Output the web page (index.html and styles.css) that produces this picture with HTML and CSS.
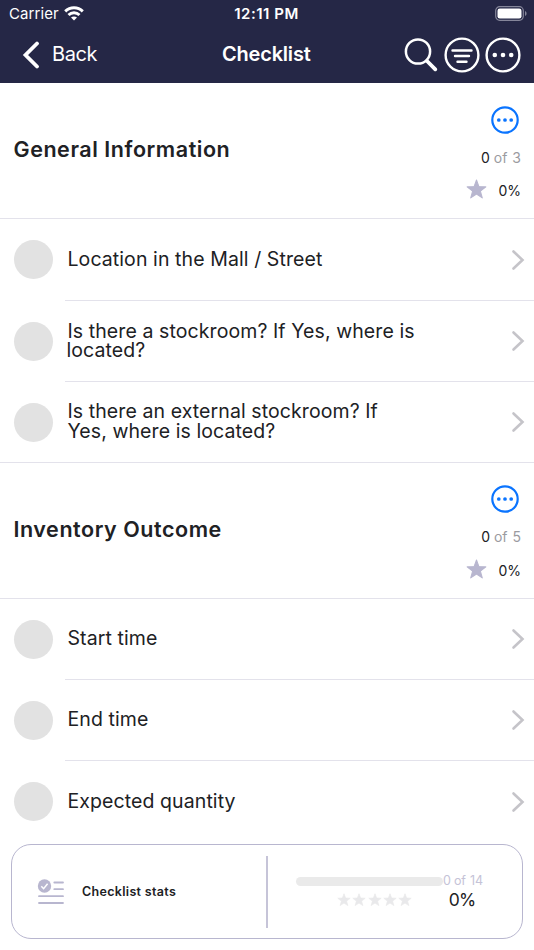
FILE: index.html
```html
<!DOCTYPE html>
<html lang="en">
<head>
<meta charset="utf-8">
<title>Checklist</title>
<link rel="stylesheet" href="styles.css">
</head>
<body>
<svg width="0" height="0" class="defs" aria-hidden="true">
  <symbol id="star" viewBox="0 0 20 20"><path d="M10 1l2.3 6.2 6.6.3-5.2 4.1 1.8 6.4-5.5-3.7L4.500 18l1.800-6.400L1.100 7.500l6.600-.3z" stroke="currentColor" stroke-width="1" stroke-linejoin="round" fill="currentColor"/></symbol>
  <symbol id="more" viewBox="0 0 28 28"><circle cx="14" cy="14" r="12.700" fill="none" stroke="currentColor" stroke-width="2.200"/><g fill="currentColor"><circle cx="7.800" cy="14" r="1.850"/><circle cx="14" cy="14" r="1.850"/><circle cx="20.200" cy="14" r="1.850"/></g></symbol>
  <symbol id="chev" viewBox="0 0 14 22"><path d="M2.500 2.500L11.500 11l-9 8.500" fill="none" stroke="currentColor" stroke-width="2.600" stroke-linecap="round" stroke-linejoin="miter"/></symbol>
</svg>
<div class="screen">
  <header class="top">
    <div class="status">
      <div class="carrier"><span>Carrier</span>
        <svg class="wifi" viewBox="0 0 20 15"><g fill="none" stroke="#fff" stroke-width="2.900"><path d="M1.200 5.400C6.200.6 13.800.6 18.800 5.400"/><path d="M4.500 9c3.100-3 7.900-3 11 0"/></g><path d="M10 14.600l-3-3c1.700-1.500 4.300-1.500 6 0z" fill="#fff"/></svg>
      </div>
      <div class="clock">12:11 PM</div>
      <svg class="battery" viewBox="0 0 32 15"><rect x=".7" y=".7" width="27.600" height="13.600" rx="4" fill="none" stroke="#85869a" stroke-width="1.200"/><rect x="2.500" y="2.500" width="24" height="10" rx="2.300" fill="#fff"/><path d="M30 5v5c2.100-.8 2.100-4.200 0-5z" fill="#85869a"/></svg>
    </div>
    <nav class="nav">
      <div class="back"><svg viewBox="0 0 18 28"><path d="M15 2.500L3.500 14 15 25.500" fill="none" stroke="#fff" stroke-width="3.800" stroke-linecap="round"/></svg><span>Back</span></div>
      <h1>Checklist</h1>
      <div class="actions">
        <svg class="search" viewBox="0 0 34 36"><circle cx="14" cy="14.500" r="12.100" fill="none" stroke="#fff" stroke-width="2.500"/><path d="M23 24l8.300 8.300" stroke="#fff" stroke-width="3.800" stroke-linecap="round"/></svg>
        <svg class="round" viewBox="0 0 36 36"><g fill="none" stroke="#fff" stroke-width="2.400" stroke-linecap="round"><circle cx="18" cy="18" r="16.400"/><path d="M8.500 13.500h19M11 19h14M13.500 24.700h9"/></g></svg>
        <svg class="round" viewBox="0 0 36 36"><circle cx="18" cy="18" r="16.400" fill="none" stroke="#fff" stroke-width="2.400"/><g fill="#fff"><circle cx="9.800" cy="18" r="2.300"/><circle cx="18" cy="18" r="2.300"/><circle cx="26.200" cy="18" r="2.300"/></g></svg>
      </div>
    </nav>
  </header>
  <main>
    <section>
      <div class="head">
        <h2>General Information</h2>
        <div class="meta">
          <svg class="more"><use href="#more"/></svg>
          <div class="count"><b>0</b> of <i>3</i></div>
          <div class="score"><svg><use href="#star"/></svg><span>0%</span></div>
        </div>
      </div>
      <div class="row"><span class="dot"></span><div class="cell"><p>Location in the Mall / Street</p><svg><use href="#chev"/></svg></div></div>
      <div class="row"><span class="dot"></span><div class="cell"><p>Is there a stockroom? If Yes, where is<br><span class="hang">located?</span></p><svg><use href="#chev"/></svg></div></div>
      <div class="row"><span class="dot"></span><div class="cell"><p>Is there an external stockroom? If<br>Yes, where is located?</p><svg><use href="#chev"/></svg></div></div>
    </section>
    <section>
      <div class="head">
        <h2>Inventory Outcome</h2>
        <div class="meta">
          <svg class="more"><use href="#more"/></svg>
          <div class="count"><b>0</b> of <i>5</i></div>
          <div class="score"><svg><use href="#star"/></svg><span>0%</span></div>
        </div>
      </div>
      <div class="row"><span class="dot"></span><div class="cell"><p>Start time</p><svg><use href="#chev"/></svg></div></div>
      <div class="row"><span class="dot"></span><div class="cell"><p>End time</p><svg><use href="#chev"/></svg></div></div>
      <div class="row"><span class="dot"></span><div class="cell"><p>Expected quantity</p><svg><use href="#chev"/></svg></div></div>
    </section>
  </main>
  <footer class="stats">
    <div class="label">
      <svg viewBox="0 0 28 28"><circle cx="7.500" cy="8" r="6.700" fill="#b8b6cf"/><path d="M4.300 8.300l2.300 2.400 4-5" fill="none" stroke="#fff" stroke-width="1.500"/><path d="M17.300 4.500H26M17.300 11.200H26M2 18.200h24M2 25h24" stroke="#b8b6cf" stroke-width="1.800" stroke-linecap="round"/></svg>
      <strong>Checklist stats</strong>
    </div>
    <div class="progress">
      <div class="line"><span class="bar"></span><span class="total">0 of <i>14</i></span></div>
      <div class="line2"><div class="stars"><svg><use href="#star"/></svg><svg><use href="#star"/></svg><svg><use href="#star"/></svg><svg><use href="#star"/></svg><svg><use href="#star"/></svg></div><span class="pct">0%</span></div>
    </div>
  </footer>
</div>
</body>
</html>
```
FILE: styles.css
```css
* { box-sizing: border-box; }
body { margin: 0; background: #fff; color: #202124; font-family: Inter, "Liberation Sans", sans-serif; }
h1, h2, p { margin: 0; }
svg { display: block; flex: none; }
i, b { font-style: normal; font-weight: 400; }
.defs { position: absolute; }
.screen { position: relative; height: 950px; overflow: hidden; }

.top { height: 83px; background: #252746; color: #fff; }
.status { display: grid; grid-template-columns: 1fr auto 1fr; align-items: center; height: 27px; padding: 0 7px 0 9px; }
.carrier { display: flex; align-items: center; gap: 5px; font-size: 15px; letter-spacing: .1px; }
.wifi { width: 20px; height: 15px; margin-top: -1px; }
.clock { font-size: 15px; font-weight: 600; letter-spacing: .5px; margin-left: -3px; }
.battery { width: 32px; height: 15px; justify-self: end; }
.nav { display: grid; grid-template-columns: 1fr auto 1fr; align-items: center; height: 56px; padding: 0 13.500px 0 22px; }
.back { display: flex; align-items: center; gap: 12px; font-size: 20px; letter-spacing: -.4px; }
.back span { margin-top: -2px; }
.back svg { width: 18px; height: 28px; }
h1 { font-size: 20px; font-weight: 600; letter-spacing: -.2px; margin: -2px 0 0 -10px; }
.actions { display: flex; align-items: center; justify-content: flex-end; gap: 5px; }
.search { width: 34px; height: 36px; margin-right: 1px; }
.round { width: 36px; height: 36px; }

.head { display: flex; justify-content: space-between; height: 136px; padding: 0 13px; border-bottom: 1px solid #e3e2eb; }
h2 { font-size: 21.500px; line-height: 133px; font-weight: 600; letter-spacing: .55px; padding-left: .5px; }
.meta { display: flex; flex-direction: column; align-items: flex-end; padding-top: 22.500px; }
.more { width: 28px; height: 28px; margin-right: 2.500px; color: #0a74ff; }
.count { margin-top: 15px; font-size: 14px; line-height: 18px; color: #9b9b9f; }
.count b { color: #202124; }
.count i { margin-left: 1px; }
.score { display: flex; align-items: center; gap: 11px; margin-top: 13.500px; font-size: 14px; line-height: 22px; }
.score svg { width: 21px; height: 21px; color: #b8b6cf; margin-top: -3px; }

.row { display: flex; align-items: stretch; height: 81.200px; padding-left: 14px; }
section:first-child .row:nth-child(2) { height: 82px; }
section:first-child .row:nth-child(4) { height: 80.400px; }
.dot { width: 39px; height: 39px; margin: 21px 12px 0 .3px; border-radius: 50%; background: #e2e2e2; flex: none; }
.cell { flex: 1; display: flex; align-items: center; justify-content: space-between; padding: 0 9px 0 2px; border-bottom: 1px solid #e3e2eb; }
.cell svg { width: 14px; height: 22px; color: #c5c4c9; }
p { font-size: 19.500px; line-height: 19.500px; letter-spacing: .09px; padding-left: .2px; }
.hang { margin-left: -1px; }
section:first-child .row:last-child { padding-left: 0; border-bottom: 1px solid #e3e2eb; }
section:first-child .row:last-child .dot { margin-left: 14.300px; }
.row:last-child .cell { border-bottom: 0; }

.stats { position: absolute; left: 11px; top: 844px; width: 512px; height: 95px; display: flex; align-items: center; border: 1.500px solid #b8b6cf; border-radius: 20px; background: #fff; }
.label { display: flex; align-items: center; width: 256px; height: 72px; padding-left: 25px; gap: 17px; border-right: 2px solid #c6c4d8; font-size: 12.500px; letter-spacing: .32px; }
.label strong { font-weight: 600; }
.label svg { width: 28px; height: 28px; }
.progress { padding-left: 28px; }
.line { display: flex; align-items: center; height: 16px; }
.bar { width: 147px; height: 9px; border-radius: 5px; background: #eaeaea; }
.total { font-size: 12.500px; letter-spacing: -.2px; margin-top: -2px; color: #c5c3d7; }
.total i { margin-left: 1px; }
.line2 { display: flex; align-items: center; height: 21px; padding-left: 41px; }
.stars { display: flex; gap: 1.300px; color: #e9e9eb; }
.stars svg { width: 14px; height: 14px; }
.pct { margin-left: 36.500px; margin-top: -1px; font-size: 17.500px; letter-spacing: -.8px; }
```
